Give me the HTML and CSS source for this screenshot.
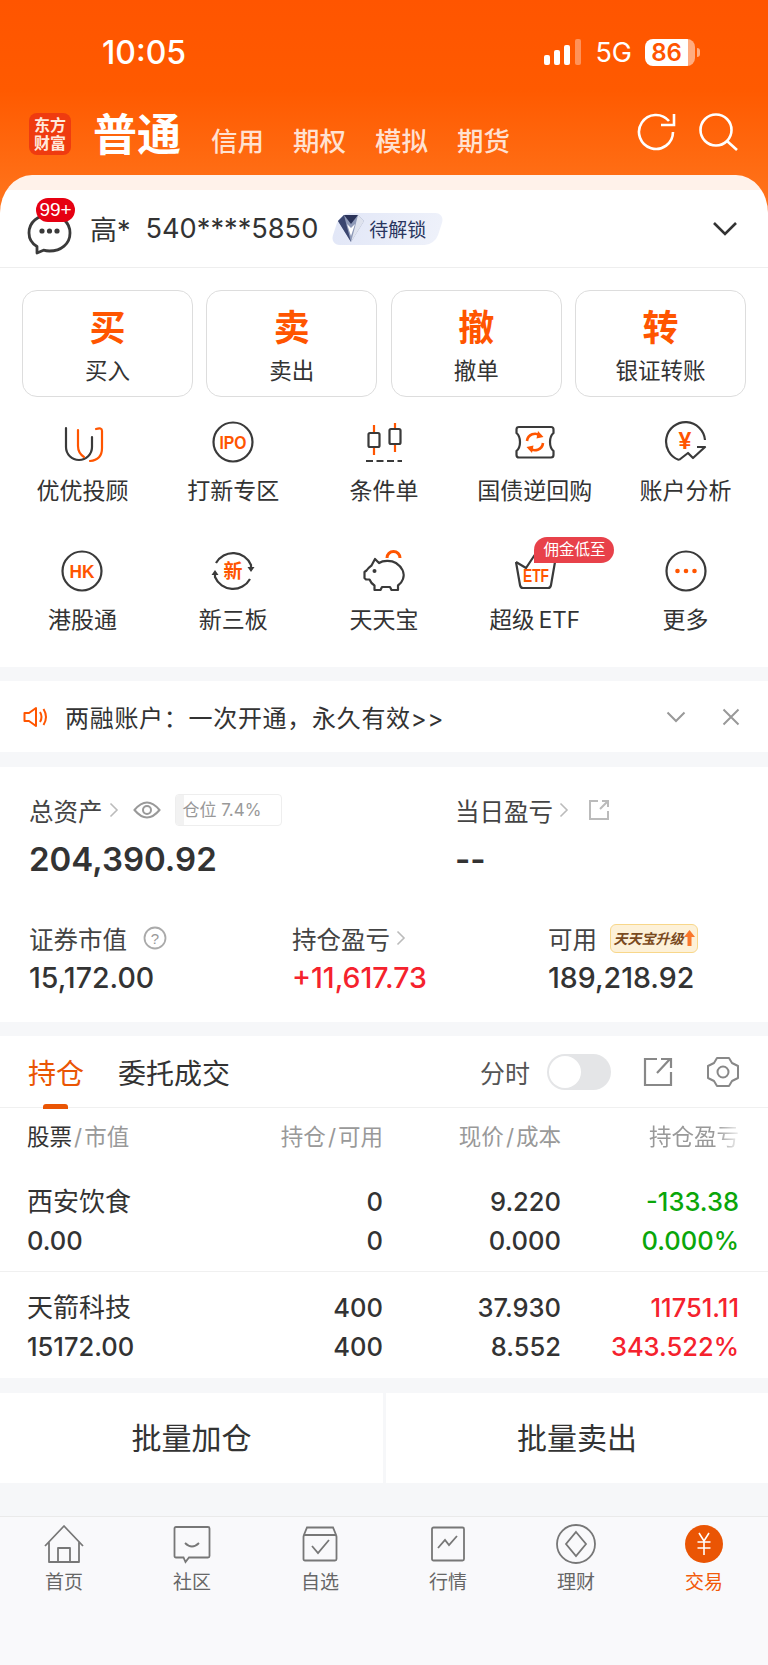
FILE: index.html
```html
<!DOCTYPE html>
<html lang="zh-CN">
<head>
    <meta charset="UTF-8">
    <meta name="viewport" content="width=device-width, initial-scale=1.0">
    <title>交易</title>
    <link rel="stylesheet" href="styles.css">
</head>
<body>
<div id="page">
    <div class="top">
        <div class="status">
            <span class="clock">10:05</span>
            <div class="status-right">
                <svg class="signal" width="40" height="28" viewBox="0 0 40 28"><rect x="1" y="17" width="6" height="10" rx="2" fill="#fff"/><rect x="11" y="12" width="6" height="15" rx="2" fill="#fff"/><rect x="21" y="7" width="6" height="20" rx="2" fill="#fff"/><rect x="32" y="1" width="6" height="26" rx="2" fill="#fff" fill-opacity=".35"/></svg>
                <span class="net">5G</span>
                <div class="battery"><span class="battery-num">86</span></div>
            </div>
        </div>
        <div class="nav">
            <div class="logo">东方<br>财富</div>
            <span class="nav-main">普通</span>
            <span class="nav-tab">信用</span>
            <span class="nav-tab">期权</span>
            <span class="nav-tab">模拟</span>
            <span class="nav-tab">期货</span>
            <div class="nav-icons">
                <svg width="40" height="40" viewBox="0 0 40 40" fill="none" stroke="#fff" stroke-width="2.6"><path d="M33 9A17 17 0 1 0 37 20"/><path d="M25 13H38V2"/></svg>
                <svg width="40" height="40" viewBox="0 0 40 40" fill="none" stroke="#fff" stroke-width="2.6"><circle cx="18" cy="18" r="15.5"/><path d="M29 29L39 38"/></svg>
            </div>
        </div>
        <div class="account">
            <div class="chat">
                <svg width="46" height="44" viewBox="0 0 46 44" fill="none"><path d="M10 41V34.500C4 31 2 26 2 21C2 10 11 3 22.500 3S43 10 43 21S34 39 22.500 39C20 39 18.500 38.800 16.500 38.200Z" stroke="#3a3a3a" stroke-width="2.800" stroke-linejoin="round"/><circle cx="15" cy="19" r="2.600" fill="#3a3a3a"/><circle cx="22.500" cy="19" r="2.600" fill="#3a3a3a"/><circle cx="30" cy="19" r="2.600" fill="#3a3a3a"/></svg>
                <span class="chat-badge">99+</span>
            </div>
            <span class="acc-name">高*</span>
            <span class="acc-no">540****5850</span>
            <div class="lock">
                <svg width="28" height="29" viewBox="0 0 28 29"><polygon points="1,7 7,1 21,1 27,7 14,28" fill="#8f9ab8"/><polygon points="7,1 21,1 14,10" fill="#2a3258"/><polygon points="1,7 7,1 10,13 14,28" fill="#3b4670"/><polygon points="27,7 21,1 18,13 14,28" fill="#dfe3ee"/><polygon points="10,10 14,22 18,10 14,14" fill="#fff"/></svg>
                <span>待解锁</span>
            </div>
            <svg class="acc-arrow" width="26" height="16" viewBox="0 0 26 16" fill="none" stroke="#333" stroke-width="2.600"><path d="M2 2L13 13L24 2"/></svg>
        </div>
    </div>

    <div class="panel">
        <div class="trade">
            <div class="trade-btn"><b>买</b><span>买入</span></div>
            <div class="trade-btn"><b>卖</b><span>卖出</span></div>
            <div class="trade-btn"><b>撤</b><span>撤单</span></div>
            <div class="trade-btn"><b>转</b><span>银证转账</span></div>
        </div>
        <div class="menu">
            <div class="menu-item">
                <svg width="44" height="44" viewBox="0 0 44 44" fill="none" stroke-width="2.2" stroke-linecap="round"><path d="M6 8V27A13 13 0 0 0 32 27V17" stroke="#3a3a3a"/><path d="M18 10V26Q18 33 24 37" stroke="#ff5500"/><path d="M36 9Q42 7 42 11V28Q42 40 30 41" stroke="#ff5500"/></svg>
                <span>优优投顾</span>
            </div>
            <div class="menu-item">
                <svg width="44" height="44" viewBox="0 0 44 44" fill="none"><circle cx="22" cy="22" r="19.5" stroke="#3a3a3a" stroke-width="2.2"/><text class="icon-text" x="22" y="28.5" font-size="18.5" textLength="27" lengthAdjust="spacingAndGlyphs" text-anchor="middle">IPO</text></svg>
                <span>打新专区</span>
            </div>
            <div class="menu-item">
                <svg width="44" height="44" viewBox="0 0 44 44" fill="none" stroke-width="2.2"><path d="M12 5V35M33 3V32" stroke="#ff5500"/><rect x="6.5" y="13" width="11" height="14" rx="1.5" fill="#fff" stroke="#3a3a3a"/><rect x="27.5" y="9" width="11" height="15" rx="1.5" fill="#fff" stroke="#3a3a3a"/><path d="M4 41H40" stroke="#3a3a3a" stroke-dasharray="7 3.5"/></svg>
                <span>条件单</span>
            </div>
            <div class="menu-item">
                <svg width="44" height="44" viewBox="0 0 44 44" fill="none"><path d="M6 7H38Q40.500 7 40.500 9.500V13Q37 16 37 22T40.500 31V35Q40.500 37.500 38 37.500H6Q3.500 37.500 3.500 35V31Q7 28 7 22T3.500 13V9.500Q3.500 7 6 7Z" stroke="#3a3a3a" stroke-width="2.2"/><path d="M14 21A8 8 0 0 1 27.500 16M30 23A8 8 0 0 1 16.500 28" stroke="#ff5500" stroke-width="2.6"/><path d="M25 11L30.500 17L23.500 18.500ZM19 33L13.500 27L20.500 25.500Z" fill="#ff5500"/></svg>
                <span>国债逆回购</span>
            </div>
            <div class="menu-item">
                <svg width="44" height="44" viewBox="0 0 44 44" fill="none"><path d="M15 40A19.500 19.500 0 1 1 41 20M15 40L24 33L29 38L41 27H33" stroke="#3a3a3a" stroke-width="2.2" stroke-linejoin="round"/><text class="icon-text" x="21" y="29" font-size="23" text-anchor="middle">¥</text></svg>
                <span>账户分析</span>
            </div>
            <div class="menu-item">
                <svg width="44" height="44" viewBox="0 0 44 44" fill="none"><circle cx="22" cy="22" r="19.5" stroke="#3a3a3a" stroke-width="2.2"/><text class="icon-text" x="22" y="28.5" font-size="18" textLength="25" lengthAdjust="spacingAndGlyphs" text-anchor="middle">HK</text></svg>
                <span>港股通</span>
            </div>
            <div class="menu-item">
                <svg width="44" height="44" viewBox="0 0 44 44" fill="none"><path d="M5 14A19.500 19.500 0 0 1 40 16V19M39 30A19.500 19.500 0 0 1 4 28V25" stroke="#3a3a3a" stroke-width="2.2"/><path d="M36.500 18H43.500L40 23ZM7.500 26H0.500L4 21Z" fill="#3a3a3a"/><text class="icon-text" x="22" y="29" font-size="19" textLength="19" lengthAdjust="spacingAndGlyphs" text-anchor="middle">新</text></svg>
                <span>新三板</span>
            </div>
            <div class="menu-item">
                <svg width="44" height="44" viewBox="0 0 44 44" fill="none"><path d="M25 9A6.500 6.500 0 0 1 38 9" stroke="#ff5500" stroke-width="3"/><path d="M13 10L17 14C21 11.500 29 11 34 14C40 18 43 24 41 30C40 33 38 35 36 36.500V41H29.500L28 38H20L18.500 41H12.500V36.500C10 35 8.500 33 7.500 30.500H4L2.500 29V23L4.500 21.500C6 19 7.500 18 9.500 16.500Z" stroke="#3a3a3a" stroke-width="2.2" stroke-linejoin="round"/><circle cx="12.5" cy="22" r="2" fill="#3a3a3a"/></svg>
                <span>天天宝</span>
            </div>
            <div class="menu-item">
                <svg width="44" height="44" viewBox="0 0 44 44" fill="none"><path d="M3 13L7 36Q7.500 39 10 39H35Q37.500 39 38 36L42 13" stroke="#3a3a3a" stroke-width="2.2"/><path d="M3 13L13 19L23 4" stroke="#3a3a3a" stroke-width="2.2"/><text class="icon-text" x="23" y="32.5" font-size="18" textLength="26" lengthAdjust="spacingAndGlyphs" text-anchor="middle">ETF</text></svg>
                <span class="etf-label">超级 ETF</span>
                <em class="menu-tag">佣金低至</em>
            </div>
            <div class="menu-item">
                <svg width="44" height="44" viewBox="0 0 44 44" fill="none"><circle cx="22" cy="22" r="19.5" stroke="#3a3a3a" stroke-width="2.2"/><circle cx="13.5" cy="22" r="2.3" fill="#ff5500"/><circle cx="22" cy="22" r="2.3" fill="#ff5500"/><circle cx="30.5" cy="22" r="2.3" fill="#ff5500"/></svg>
                <span>更多</span>
            </div>
        </div>
    </div>

    <div class="notice">
        <svg width="26" height="22" viewBox="0 0 26 22" fill="none" stroke="#ff5500" stroke-width="2"><path d="M1.500 7H6L13 2V20L6 15H1.500Z" stroke-linejoin="round"/><path d="M17 6Q20 11 17 16M20.500 3Q25.500 11 20.500 19"/></svg>
        <span class="notice-text">两融账户：一次开通，永久有效&gt;&gt;</span>
        <svg class="notice-down" width="20" height="12" viewBox="0 0 20 12" fill="none" stroke="#999" stroke-width="2"><path d="M1.500 1.500L10 10L18.500 1.500"/></svg>
        <svg class="notice-close" width="18" height="18" viewBox="0 0 18 18" fill="none" stroke="#999" stroke-width="2"><path d="M1.500 1.500L16.500 16.500M16.500 1.500L1.500 16.500"/></svg>
    </div>

    <div class="assets">
        <div class="asset-row">
            <div class="asset-big">
                <div class="asset-label">
                    <span>总资产</span>
                    <svg class="chev" width="10" height="16" viewBox="0 0 10 16" fill="none" stroke="#bbb" stroke-width="1.6"><path d="M1.500 1.500L8 8L1.500 14.500"/></svg>
                    <svg class="eye" width="28" height="20" viewBox="0 0 28 20" fill="none" stroke="#999" stroke-width="2"><path d="M1.500 10Q14 -5 26.500 10Q14 25 1.500 10Z"/><circle cx="14" cy="10" r="4"/></svg>
                    <div class="cang"><i></i><span>仓位 7.4%</span></div>
                </div>
                <div class="asset-total">204,390.92</div>
            </div>
            <div class="asset-big">
                <div class="asset-label">
                    <span>当日盈亏</span>
                    <svg class="chev" width="10" height="16" viewBox="0 0 10 16" fill="none" stroke="#bbb" stroke-width="1.6"><path d="M1.500 1.500L8 8L1.500 14.500"/></svg>
                    <svg class="ext" width="22" height="22" viewBox="0 0 22 22" fill="none" stroke="#bbb" stroke-width="2"><path d="M10 2H2V20H20V12M12 10L20 2M14 2H20V8"/></svg>
                </div>
                <div class="asset-total">--</div>
            </div>
        </div>
        <div class="asset-row second">
            <div class="asset-col">
                <div class="asset-label small">
                    <span>证券市值</span>
                    <svg class="help" width="24" height="24" viewBox="0 0 24 24" fill="none"><circle cx="12" cy="12" r="10.5" stroke="#aaa" stroke-width="1.8"/><text x="12" y="17.5" font-size="15" fill="#999" text-anchor="middle" class="help-q">?</text></svg>
                </div>
                <div class="asset-val">15,172.00</div>
            </div>
            <div class="asset-col">
                <div class="asset-label small">
                    <span>持仓盈亏</span>
                    <svg class="chev" width="10" height="16" viewBox="0 0 10 16" fill="none" stroke="#bbb" stroke-width="1.6"><path d="M1.500 1.500L8 8L1.500 14.500"/></svg>
                </div>
                <div class="asset-val up">+11,617.73</div>
            </div>
            <div class="asset-col">
                <div class="asset-label small">
                    <span>可用</span>
                    <div class="upgrade">天天宝升级<svg width="11" height="16" viewBox="0 0 11 16"><path d="M5.500 0L11 7H7.500V16H3.500V7H0Z" fill="#f9772b"/></svg></div>
                </div>
                <div class="asset-val">189,218.92</div>
            </div>
        </div>
    </div>

    <div class="positions">
        <div class="pos-tabs">
            <span class="pos-tab active">持仓</span>
            <span class="pos-tab">委托成交</span>
            <div class="pos-tools">
                <span class="fenshi">分时</span>
                <div class="toggle"><i></i></div>
                <svg class="pos-share" width="30" height="30" viewBox="0 0 30 30" fill="none" stroke="#888" stroke-width="2.2"><path d="M14 2H2V28H28V15M14 16L27 2M18 2H28V11"/></svg>
                <svg width="34" height="34" viewBox="0 0 34 34" fill="none" stroke="#888" stroke-width="2"><path d="M11 3H23L26 8L32 11V23L26 26L23 31H11L8 26L2 23V11L8 8Z" stroke-linejoin="round"/><circle cx="17" cy="17" r="5.5"/></svg>
            </div>
        </div>
        <div class="pos-head">
            <div><em>股票</em><i>/</i>市值</div>
            <div class="num">持仓<i>/</i>可用</div>
            <div class="num">现价<i>/</i>成本</div>
            <div class="num"><span class="fade">持仓盈亏</span></div>
        </div>
        <div class="pos-row">
            <div>西安饮食</div><div class="num">0</div><div class="num">9.220</div><div class="num down">-133.38</div>
            <div class="latin">0.00</div><div class="num">0</div><div class="num">0.000</div><div class="num down">0.000%</div>
        </div>
        <div class="pos-row">
            <div>天箭科技</div><div class="num">400</div><div class="num">37.930</div><div class="num up">11751.11</div>
            <div class="latin">15172.00</div><div class="num">400</div><div class="num">8.552</div><div class="num up">343.522%</div>
        </div>
    </div>

    <div class="bulk">
        <div class="bulk-btn">批量加仓</div>
        <div class="bulk-btn">批量卖出</div>
    </div>

    <div class="tabbar">
        <div class="tab">
            <svg width="44" height="40" viewBox="0 0 44 40" fill="none" stroke="#777" stroke-width="1.8"><path d="M3 22L22 2L41 22M7 18V38H37V18M16 38V24H28V38" stroke-linejoin="round"/></svg>
            <span>首页</span>
        </div>
        <div class="tab">
            <svg width="44" height="40" viewBox="0 0 44 40" fill="none" stroke="#777" stroke-width="1.8"><path d="M6 3H38Q39.500 3 39.500 4.500V32Q39.500 33.500 38 33.500H19L15.500 38L13.500 33.500H6Q4.500 33.500 4.500 32V4.500Q4.500 3 6 3Z"/><path d="M15 19Q22 26 29 19"/></svg>
            <span>社区</span>
        </div>
        <div class="tab">
            <svg width="44" height="40" viewBox="0 0 44 40" fill="none" stroke="#777" stroke-width="1.8"><path d="M5.500 12L9 3.500H35L38.500 12M7 11H37Q38.500 11 38.500 12.500V35Q38.500 36.500 37 36.500H7Q5.500 36.500 5.500 35V12.500Q5.500 11 7 11Z"/><path d="M14 22L20 29L31 16"/></svg>
            <span>自选</span>
        </div>
        <div class="tab">
            <svg width="44" height="40" viewBox="0 0 44 40" fill="none" stroke="#777" stroke-width="1.8"><rect x="6" y="3.5" width="32" height="33" rx="1.5"/><path d="M12 24L19 16L23 21L31 12"/></svg>
            <span>行情</span>
        </div>
        <div class="tab">
            <svg width="44" height="40" viewBox="0 0 44 40" fill="none" stroke="#777" stroke-width="1.8"><circle cx="22" cy="20" r="19"/><path d="M22 8L32 20L22 32L12 20Z"/></svg>
            <span>理财</span>
        </div>
        <div class="tab active">
            <svg width="44" height="40" viewBox="0 0 44 40" fill="none" stroke="#fff" stroke-width="1.6"><circle cx="22" cy="20" r="19" fill="#ea5504" stroke="none"/><path d="M17 9L22 17L27 9M15.500 18H28.500M15.500 24H28.500M22 17V31"/></svg>
            <span>交易</span>
        </div>
    </div>
</div>
</body>
</html>
```

FILE: styles.css
```css
* {
    box-sizing: border-box;
}
html, body {
    margin: 0;
    padding: 0;
}
body {
    font-family: Inter, "Noto Sans CJK SC", sans-serif;
    background-color: #f6f7f9;
    color: #333;
}
svg {
    display: block;
    flex: none;
}
#page {
    width: 768px;
    height: 1665px;
    display: flex;
    flex-direction: column;
    overflow: hidden;
}
.top {
    background: linear-gradient(#ff5500 0, #ff5a00 90px, #ff7a22 230px);
}
.status {
    display: flex;
    align-items: center;
    height: 72px;
    padding: 32px 73px 0 102px;
}
.clock {
    font-size: 32px;
    font-weight: 500;
    color: #fff;
}
.status-right {
    display: flex;
    align-items: center;
    margin-left: auto;
}
.net {
    font-size: 27px;
    margin-left: 12px;
    color: #fff;
}
.battery {
    position: relative;
    width: 50px;
    height: 27px;
    margin-left: 13px;
    border-radius: 8px;
    background: linear-gradient(90deg, #fff 86%, rgba(255,255,255,.5) 86%);
}
.battery:after {
    content: "";
    position: absolute;
    left: 52px;
    top: 9px;
    width: 3px;
    height: 9px;
    border-radius: 0 3px 3px 0;
    background: rgba(255,255,255,.5);
}
.battery-num {
    display: block;
    width: 43px;
    font-size: 24px;
    font-weight: 600;
    line-height: 27px;
    text-align: center;
    color: #ff5500;
}
.nav {
    display: flex;
    align-items: flex-end;
    height: 55px;
    margin: 35px 0 13px;
    padding: 0 30px 0 29px;
}
.logo {
    width: 42px;
    height: 42px;
    margin-bottom: 7px;
    padding-top: 3px;
    border-radius: 8px;
    background-color: #ef3b10;
    font-size: 16px;
    font-weight: 700;
    line-height: 18px;
    text-align: center;
    color: #ffe9dc;
}
.nav-main {
    width: 88px;
    margin: 0 30px 0 22px;
    font-size: 44px;
    font-weight: 700;
    line-height: 54px;
    color: #fff;
}
.nav-tab {
    width: 53px;
    margin: 0 29px 2px 0;
    font-size: 26.5px;
    font-weight: 500;
    line-height: 38px;
    color: rgba(255,255,255,.82);
}
.nav-icons {
    display: flex;
    gap: 22px;
    margin: 0 0 10px auto;
}
.account {
    display: flex;
    align-items: center;
    height: 93px;
    padding: 15px 30px 0 27px;
    border-radius: 32px 32px 0 0 / 38px 38px 0 0;
    border-bottom: 1px solid #eeeeee;
    background: linear-gradient(#fff2ea 15px, #fff 15px);
}
.chat {
    position: relative;
    width: 46px;
    height: 44px;
    margin-top: 10px;
}
.chat-badge {
    position: absolute;
    left: 9px;
    top: -14px;
    width: 39px;
    height: 24px;
    border-radius: 12px;
    background-color: #e60012;
    font-family: "Liberation Sans", sans-serif;
    font-size: 19px;
    line-height: 24px;
    text-align: center;
    color: #fff;
}
.acc-name {
    margin-left: 17px;
    font-size: 27px;
}
.acc-no {
    margin-left: 15px;
    font-size: 27.2px;
}
.lock {
    position: relative;
    display: flex;
    align-items: center;
    width: 115px;
    height: 32px;
    margin-left: 12px;
    padding-left: 7px;
    font-size: 19px;
    color: #2a3660;
}
.lock:before {
    content: "";
    position: absolute;
    left: 5px;
    right: 5px;
    top: 0;
    bottom: 0;
    border-radius: 10px;
    transform: skewX(-18deg);
    background: linear-gradient(90deg, #e2e7f7, #eef1fa);
}
.lock svg, .lock span {
    position: relative;
}
.lock span {
    margin-left: 4px;
}
.acc-arrow {
    margin-left: auto;
}
.panel {
    padding: 22px 0 32px;
    background-color: #fff;
}
.trade {
    display: grid;
    grid-template-columns: repeat(4, 1fr);
    gap: 13.5px;
    padding: 0 22px;
}
.trade-btn {
    height: 107px;
    padding-top: 15px;
    border: 1.5px solid #dddddd;
    border-radius: 15px;
    text-align: center;
}
.trade-btn b {
    display: block;
    font-size: 36px;
    line-height: 44px;
    color: #ff5500;
}
.trade-btn span {
    display: block;
    margin-top: 7px;
    font-size: 22.5px;
    line-height: 28px;
}
.menu {
    display: grid;
    grid-template-columns: repeat(5, 1fr);
    row-gap: 43px;
    margin-top: 23px;
    padding: 0 7px;
}
.menu-item {
    position: relative;
    display: flex;
    flex-direction: column;
    align-items: center;
}
.menu-item span {
    margin-top: 12px;
    font-size: 23px;
    line-height: 30px;
    white-space: nowrap;
}
.menu-item .etf-label {
    font-size: 22.5px;
    word-spacing: -2px;
}
.icon-text {
    font-family: "Liberation Sans", "Noto Sans CJK SC", sans-serif;
    font-weight: 700;
    fill: #ff5500;
}
.menu-tag {
    position: absolute;
    left: 75px;
    top: -12px;
    width: 80px;
    height: 26px;
    border-radius: 13px 13px 13px 0;
    background-color: #e8414a;
    font-size: 15.5px;
    font-style: normal;
    line-height: 26px;
    text-align: center;
    color: #fff;
}
.notice {
    display: flex;
    align-items: center;
    height: 71px;
    margin-top: 14px;
    padding: 0 28px 0 23px;
    background-color: #fff;
}
.notice-text {
    margin-left: 16px;
    font-size: 24px;
    letter-spacing: .7px;
}
.notice-down {
    margin-left: auto;
}
.notice-close {
    margin-left: 36px;
}
.assets {
    height: 255px;
    margin-top: 15px;
    padding: 27px 0 0 29px;
    background-color: #fff;
}
.asset-row {
    display: flex;
}
.asset-big {
    flex: none;
    width: 426px;
}
.asset-col {
    flex: none;
    width: 263px;
}
.asset-col:nth-child(2) {
    width: 256px;
}
.second {
    margin-top: 42px;
}
.asset-label {
    display: flex;
    align-items: center;
    height: 32px;
    font-size: 24.5px;
    color: #444;
}
.small {
    height: 30px;
}
.chev {
    margin-left: 6px;
}
.eye {
    margin-left: 14px;
}
.ext {
    margin-left: 19px;
}
.help {
    margin-left: 16px;
}
.help-q {
    font-family: "Liberation Sans", sans-serif;
}
.cang {
    position: relative;
    width: 107px;
    height: 32px;
    margin-left: 14px;
    border: 1px solid #eeeeee;
    border-radius: 4px;
    overflow: hidden;
}
.cang i {
    display: block;
    width: 8px;
    height: 100%;
    background-color: #f2f2f2;
}
.cang span {
    position: absolute;
    left: 7px;
    top: 0;
    font-size: 17px;
    line-height: 30px;
    color: #999;
}
.asset-total {
    margin-top: 11px;
    font-size: 33px;
    font-weight: 600;
    line-height: 44px;
}
.asset-val {
    margin-top: 5px;
    font-size: 28.5px;
    font-weight: 500;
    line-height: 40px;
}
.up {
    color: #f5222d;
}
.down {
    color: #0aa60a;
}
.upgrade {
    display: flex;
    align-items: center;
    justify-content: center;
    width: 88px;
    height: 29px;
    margin-left: 13px;
    border: 1.5px solid #f8d78a;
    border-radius: 6px;
    background-color: #fdf1d8;
    font-size: 14px;
    font-weight: 700;
    font-style: italic;
    color: #7a4a1e;
}
.positions {
    margin-top: 14px;
    background-color: #fff;
}
.pos-tabs {
    position: relative;
    display: flex;
    align-items: center;
    height: 72px;
    padding: 0 28px;
    border-bottom: 1px solid #f0f0f0;
}
.pos-tab {
    margin-right: 34px;
    font-size: 28px;
}
.pos-tab.active {
    position: relative;
    color: #ea5504;
}
.pos-tab.active:after {
    content: "";
    position: absolute;
    left: 15px;
    bottom: -17px;
    width: 25px;
    height: 5px;
    border-radius: 3px 3px 0 0;
    background-color: #ea5504;
}
.pos-tools {
    display: flex;
    align-items: center;
    margin-left: auto;
}
.fenshi {
    font-size: 25px;
    color: #555;
}
.toggle {
    width: 64px;
    height: 36px;
    margin: 0 32px 0 17px;
    padding: 2px;
    border-radius: 18px;
    background-color: #e4e5e7;
}
.toggle i {
    display: block;
    width: 32px;
    height: 32px;
    border-radius: 50%;
    background-color: #fff;
}
.pos-share {
    margin-right: 33px;
}
.pos-head, .pos-row {
    display: grid;
    grid-template-columns: 206px 150px 178px 178px;
    padding-left: 27px;
}
.pos-head {
    height: 58px;
    font-size: 22.5px;
    line-height: 58px;
    color: #999;
}
.pos-head em {
    font-style: normal;
    color: #333;
}
.pos-head i {
    margin: 0 2px;
    font-style: normal;
}
.num {
    text-align: right;
}
.fade {
    -webkit-mask-image: linear-gradient(90deg, #000 75%, rgba(0,0,0,.15) 100%);
    mask-image: linear-gradient(90deg, #000 75%, rgba(0,0,0,.15) 100%);
}
.pos-row {
    padding-top: 16px;
    padding-bottom: 11px;
    font-size: 26px;
    line-height: 39px;
    border-bottom: 1px solid #f0f0f0;
}
.pos-row .num, .pos-row .latin {
    font-size: 25.5px;
    font-weight: 500;
}
.pos-row + .pos-row {
    padding-bottom: 12px;
    border-bottom: 0;
}
.bulk {
    display: grid;
    grid-template-columns: 383px 1fr;
    gap: 3px;
    margin-top: 15px;
}
.bulk-btn {
    height: 90px;
    background-color: #fff;
    font-size: 30px;
    line-height: 90px;
    text-align: center;
}
.tabbar {
    display: grid;
    grid-template-columns: repeat(6, 1fr);
    flex: 1;
    margin-top: 33px;
    padding-top: 7px;
    border-top: 1px solid #eaeaea;
    background-color: #f9f9fb;
}
.tab {
    display: flex;
    flex-direction: column;
    align-items: center;
    font-size: 19px;
    line-height: 28px;
    color: #666;
}
.tab span {
    margin-top: 5px;
}
.tab.active {
    color: #f25a0a;
}
```
